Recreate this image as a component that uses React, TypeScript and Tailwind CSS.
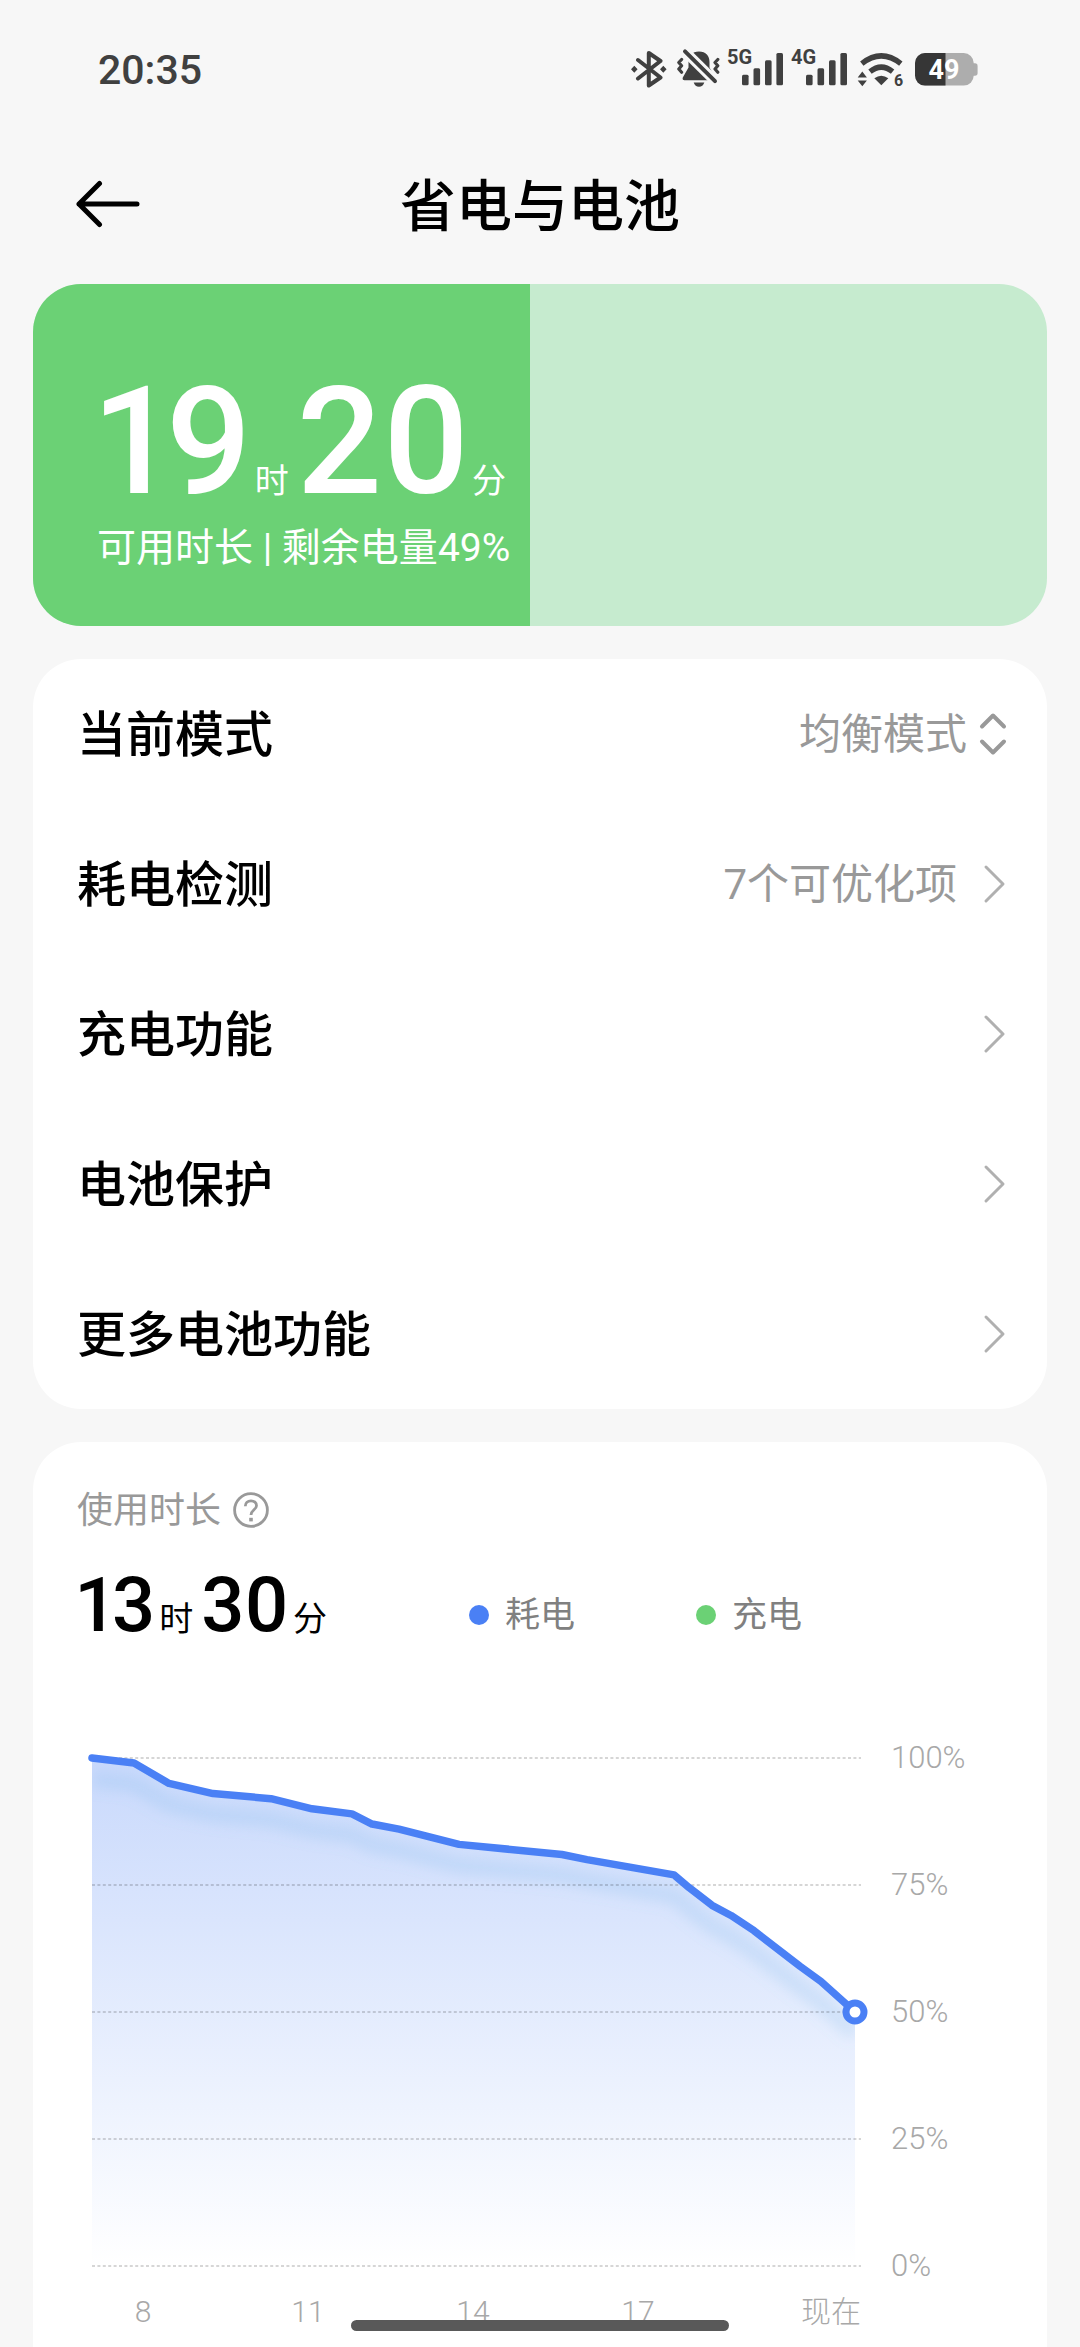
import { useId, useMemo, useState } from "react";
import type { ReactNode } from "react";

interface BatteryPoint {
  x: number;
  level: number;
}

const BATTERY_LEVEL = 49;

const HISTORY: BatteryPoint[] = [
  { x: 15, level: 100 },
  { x: 57, level: 99 },
  { x: 92, level: 95 },
  { x: 136, level: 93 },
  { x: 194, level: 92 },
  { x: 235, level: 90 },
  { x: 275, level: 89 },
  { x: 295, level: 87 },
  { x: 322, level: 86 },
  { x: 382, level: 83 },
  { x: 485, level: 81 },
  { x: 510, level: 80 },
  { x: 597, level: 77 },
  { x: 612, level: 74.5 },
  { x: 635, level: 71 },
  { x: 654, level: 69 },
  { x: 677, level: 66 },
  { x: 723, level: 59 },
  { x: 744, level: 56 },
  { x: 778, level: 50 },
];

const Y_TICKS = [100, 75, 50, 25, 0];

const X_TICKS = [
  { x: 66, label: "8" },
  { x: 231, label: "11" },
  { x: 396, label: "14" },
  { x: 561, label: "17" },
  { x: 754, label: "现在" },
];

const MENU = [
  { label: "耗电检测", value: "7个可优化项" },
  { label: "充电功能" },
  { label: "电池保护" },
  { label: "更多电池功能" },
];

const PLOT_TOP = 20;
const PLOT_HEIGHT = 508;
const yFor = (level: number) => PLOT_TOP + ((100 - level) / 100) * PLOT_HEIGHT;

function BluetoothIcon() {
  return (
    <svg width="40" height="40" viewBox="0 0 40 40" aria-hidden="true">
      <path
        d="M8 12 30.5 29.5 18.8 37.5V5L30.5 13 8 30.5"
        fill="none"
        stroke="#404040"
        strokeWidth="4"
        strokeLinejoin="round"
        strokeLinecap="round"
      />
      <path d="M4.3 17.8 7.6 21.3 4.3 24.8 1 21.3ZM33.3 17.8 36.6 21.3 33.3 24.8 30 21.3Z" fill="#404040" />
    </svg>
  );
}

function MutedIcon() {
  return (
    <svg width="44" height="40" viewBox="0 0 44 40" aria-hidden="true">
      <path
        d="M23 3.5C16 3.5 12.5 8 12.5 14V19.5L6.8 29.5Q6 32.3 8.5 32.3H37.5Q40 32.3 39 29.5L33.5 19.5V14C33.5 8 30 3.5 23 3.5Z"
        fill="#404040"
      />
      <path d="M17.7 34.6H28.3C27.5 37.4 25.5 38.8 23 38.8S18.5 37.4 17.7 34.6Z" fill="#404040" />
      <path d="M6 .5 44 38" stroke="#f7f7f7" strokeWidth="10" />
      <path d="M38 30 44 32V40H34V33Z" fill="#f7f7f7" />
      <path d="M9 3.3 39 33.2" stroke="#404040" strokeWidth="4" strokeLinecap="round" />
      <path
        d="M5.6 11.5 2.8 14.5 5.6 17.8 2.8 21 5.6 24.2M41.8 11.5 39 14.5 41.8 17.8 39 21 41.8 24.2"
        fill="none"
        stroke="#404040"
        strokeWidth="3.2"
        strokeLinejoin="round"
        strokeLinecap="round"
      />
    </svg>
  );
}

function SignalIcon({ network }: { network: string }) {
  return (
    <svg width="58" height="40" viewBox="0 0 58 40" className="overflow-visible" fill="#404040" aria-label={network}>
      <text x="1" y="16" fontSize="20" fontWeight="700">
        {network}
      </text>
      <rect x="16" y="26.7" width="6.6" height="10.6" rx="1.5" />
      <rect x="27.5" y="20.3" width="6.6" height="17" rx="1.5" />
      <rect x="39" y="12.3" width="6.6" height="25" rx="1.5" />
      <rect x="50.4" y="5" width="6.6" height="32.3" rx="1.5" />
    </svg>
  );
}

function WifiIcon() {
  return (
    <svg width="51" height="40" viewBox="-3 0 51 40" className="overflow-visible" fill="#404040" aria-hidden="true">
      <path d="M4.8 15.6Q24.3 .2 43.8 15.6" fill="none" stroke="#404040" strokeWidth="5.4" />
      <path d="M13 23.6Q24.3 14.6 35.6 23.6" fill="none" stroke="#404040" strokeWidth="5.4" />
      <path d="M17.3 30.3Q24.3 25.2 31.3 30.3L24.3 37.2Z" />
      <path d="M.7 29.4 5.3 23.6 9.9 29.4ZM.7 32.4 5.3 38.2 9.9 32.4Z" />
      <text x="37" y="38.4" fontSize="16" fontWeight="700">
        6
      </text>
    </svg>
  );
}

function BatteryIcon() {
  const clip = useId();
  return (
    <svg width="67" height="40" viewBox="-4 0 67 40" aria-label={`${BATTERY_LEVEL}%`}>
      <clipPath id={clip}>
        <rect x="0" y="5" width="58.7" height="32.6" rx="10" />
      </clipPath>
      <path d="M57 15.3H60Q62.6 15.3 62.6 18V25Q62.6 27.7 60 27.7H57Z" fill="#adadad" />
      <g clipPath={`url(#${clip})`}>
        <rect x="0" y="5" width="59" height="33" fill="#adadad" />
        <rect x="0" y="5" width="30.5" height="33" fill="#363636" />
      </g>
      <text x="29" y="30.5" fontSize="27" fontWeight="700" fill="#fff" textAnchor="middle">
        {BATTERY_LEVEL}
      </text>
    </svg>
  );
}

function StatusBar() {
  return (
    <div className="flex h-[124px] items-start justify-between pt-12 pr-[102px] pl-[98px] text-[#404040]">
      <span className="text-[41px] leading-[44px] font-medium">20:35</span>
      <div className="flex gap-1.5">
        <BluetoothIcon />
        <MutedIcon />
        <SignalIcon network="5G" />
        <SignalIcon network="4G" />
        <WifiIcon />
        <BatteryIcon />
      </div>
    </div>
  );
}

function Header() {
  return (
    <header className="grid h-40 grid-cols-[1fr_auto_1fr] items-center px-[75px]">
      <button type="button" aria-label="返回" className="justify-self-start">
        <svg width="66" height="48" viewBox="0 0 66 48" fill="none" stroke="#000" strokeWidth="5" strokeLinecap="round" strokeLinejoin="round">
          <path d="M24.5 3.5 4 24 24.5 44.5M4 24H62" />
        </svg>
      </button>
      <h1 className="pt-1.5 text-[56px] leading-[64px] font-medium">省电与电池</h1>
    </header>
  );
}

function Duration({ hours, minutes, big }: { hours: number; minutes: number; big?: boolean }) {
  const num = big
    ? "text-[150px] leading-[110px] font-medium proportional-nums"
    : "text-[76px] leading-[60px] font-medium proportional-nums";
  const unit = big ? "text-[34px] leading-[34px] pl-0.5 pr-2" : "text-[34px] leading-[34px] pl-1 pr-2";
  return (
    <p className="flex items-baseline">
      <span className={num}>{hours}</span>
      <span className={unit}>时</span>
      <span className={num}>{minutes}</span>
      <span className={unit}>分</span>
    </p>
  );
}

function BatteryCard() {
  return (
    <section className="relative h-[342px] overflow-hidden rounded-[48px] bg-[#c6ebcf]">
      <div className="absolute inset-y-0 left-0 bg-[#6bd175]" style={{ width: `${BATTERY_LEVEL}%` }} />
      <div className="relative px-16 pt-[103px] text-white">
        <Duration hours={19} minutes={20} big />
        <p className="mt-[26px] text-[39px] leading-[48px]">可用时长 | 剩余电量{BATTERY_LEVEL}%</p>
      </div>
    </section>
  );
}

function Row({ children }: { children: ReactNode }) {
  return <li className="flex h-[150px] items-center">{children}</li>;
}

function ModeSelect() {
  const [mode, setMode] = useState("均衡模式");
  return (
    <>
      <label htmlFor="mode" className="flex-1 pt-1 text-[49px] leading-[60px] font-medium">
        当前模式
      </label>
      <select
        id="mode"
        value={mode}
        onChange={(e) => setMode(e.target.value)}
        className="appearance-none bg-transparent pt-0.5 text-right text-[42px] leading-[52px] text-[#999]"
      >
        <option>均衡模式</option>
      </select>
      <svg width="28" height="44" viewBox="0 0 28 44" className="ml-3" fill="none" stroke="#999" strokeWidth="4" strokeLinecap="round" strokeLinejoin="round" aria-hidden="true">
        <path d="M3 14.5 14 3.5 25 14.5M3 29.5 14 40.5 25 29.5" />
      </svg>
    </>
  );
}

function MenuCard() {
  return (
    <ul className="rounded-[48px] bg-white pr-10 pl-11">
      <Row>
        <ModeSelect />
      </Row>
      {MENU.map((item) => (
        <Row key={item.label}>
          <button type="button" className="flex h-full flex-1 items-center text-left">
            <span className="flex-1 pt-1 text-[49px] leading-[60px] font-medium">{item.label}</span>
            <span className="pt-0.5 text-[42px] leading-[52px] text-[#999]">{item.value}</span>
            <svg width="24" height="40" viewBox="0 0 24 40" className="ml-[26px]" fill="none" stroke="#b0b0b0" strokeWidth="3" strokeLinecap="round" strokeLinejoin="round" aria-hidden="true">
              <path d="M3 3 20 20 3 37" />
            </svg>
          </button>
        </Row>
      ))}
    </ul>
  );
}

function LegendItem({ dot, label }: { dot: string; label: string }) {
  return (
    <li className="flex items-center gap-4 text-[35px] leading-[40px] text-[#808080]">
      <span className={`size-5 rounded-full ${dot}`} />
      <span className="pt-0.5">{label}</span>
    </li>
  );
}

function UsageChart() {
  const id = useId();
  const end = HISTORY[HISTORY.length - 1];

  const line = useMemo(
    () => HISTORY.map((p, i) => `${i === 0 ? "M" : "L"}${p.x} ${yFor(p.level)}`).join(""),
    []
  );
  const area = `${line}V${yFor(0)}H${HISTORY[0].x}Z`;

  return (
    <svg viewBox="0 0 926 590" className="block w-full" role="img" aria-label="电量曲线">
      <defs>
        <linearGradient id={`${id}fill`} x1="0" y1={PLOT_TOP} x2="0" y2={yFor(0)} gradientUnits="userSpaceOnUse">
          <stop offset="0" stopColor="#4a80f5" stopOpacity="0.3" />
          <stop offset="1" stopColor="#4a80f5" stopOpacity="0" />
        </linearGradient>
        <clipPath id={`${id}area`}>
          <path d={area} />
        </clipPath>
        <filter id={`${id}blur`} x="-10%" y="-20%" width="120%" height="140%">
          <feGaussianBlur stdDeviation="7" />
        </filter>
      </defs>

      <path d={area} fill={`url(#${id}fill)`} />
      {/* soft shadow under the curve */}
      <g clipPath={`url(#${id}area)`}>
        <path
          d={line}
          transform="translate(0 21)"
          fill="none"
          stroke="#7db4e6"
          strokeOpacity="0.22"
          strokeWidth="16"
          filter={`url(#${id}blur)`}
        />
      </g>

      {Y_TICKS.map((tick) => (
        <g key={tick}>
          <path d={`M15 ${yFor(tick)}H784`} stroke="#000" strokeOpacity="0.16" strokeWidth="2" strokeDasharray="3 2.4" />
          <text x="814" y={yFor(tick) + 10} fontSize="31" fontWeight="300" fill="#a8a8a8">
            {tick}%
          </text>
        </g>
      ))}
      {X_TICKS.map((tick) => (
        <text key={tick.label} x={tick.x} y="584" fontSize="30" fontWeight="300" fill="#a8a8a8" textAnchor="middle">
          {tick.label}
        </text>
      ))}

      <path d={line} fill="none" stroke="#4a80f5" strokeWidth="7.5" strokeLinecap="round" strokeLinejoin="round" />
      <circle cx={end.x} cy={yFor(end.level)} r="9" fill="#fff" stroke="#4a80f5" strokeWidth="7" />
    </svg>
  );
}

function UsageCard() {
  return (
    <section className="flex-1 rounded-t-[48px] bg-white px-11 pt-[43px]">
      <h2 className="flex items-center gap-3 text-[36px] leading-[48px] text-[#999]">
        <span className="pt-0.5">使用时长</span>
        <button type="button" aria-label="说明">
          <svg width="36" height="36" viewBox="0 0 36 36" fill="none" stroke="#999" strokeWidth="2.8">
            <circle cx="18" cy="18" r="16.4" />
            <path d="M12.3 14.2C12.3 10.7 14.7 8.8 18 8.8S23.5 10.8 23.5 13.7C23.5 17.6 18 18.2 18 23" />
            <path d="M16.2 27.6H19.8" strokeWidth="3.6" />
          </svg>
        </button>
      </h2>
      <div className="mt-10 flex items-center">
        <div className="w-[392px]">
          <Duration hours={13} minutes={30} />
        </div>
        <ul className="flex gap-[121px] pt-[18px]">
          <LegendItem dot="bg-[#4a80f5]" label="耗电" />
          <LegendItem dot="bg-[#6bd175]" label="充电" />
        </ul>
      </div>
      <div className="mt-[102px]">
        <UsageChart />
      </div>
    </section>
  );
}

export default function App() {
  return (
    <div className="flex min-h-screen flex-col bg-[#f7f7f7] font-[Roboto,'Noto_Sans_CJK_SC',sans-serif] text-black">
      <StatusBar />
      <Header />
      <main className="flex flex-1 flex-col gap-[33px] px-[33px]">
        <BatteryCard />
        <MenuCard />
        <UsageCard />
      </main>
      {/* gesture bar */}
      <div className="fixed bottom-4 left-1/2 h-[11px] w-[378px] -translate-x-1/2 rounded-full bg-[#595959]" />
    </div>
  );
}
